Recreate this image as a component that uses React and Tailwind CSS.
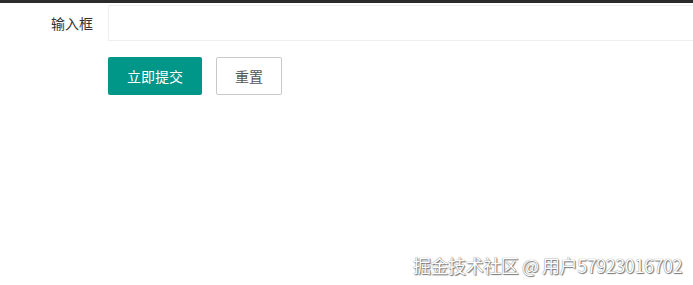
export default function App() {
  return (
    <div className="relative w-[693px] h-[285px] bg-white overflow-hidden font-['Microsoft_YaHei','Noto_Sans_CJK_SC',sans-serif] text-[14px] text-[#333]">
      <div className="h-[3px] bg-[#2b2b2b]" />
      <div className="flex items-center mt-[2px]">
        <label className="w-[93px] text-right">输入框</label>
        <div className="w-[15px]" />
        <div className="flex-1 h-[36px] border border-r-0 border-[#eee] rounded-l-[2px]" />
      </div>
      <div className="flex pl-[108px] mt-[16px] gap-[14px]">
        <button className="h-[38px] w-[94px] bg-[#009688] text-white rounded-[2px]">立即提交</button>
        <button className="h-[38px] w-[66px] border border-[#C9C9C9] text-[#555] bg-white rounded-[2px]">重置</button>
      </div>
      <div className="absolute left-[413px] top-[253px] text-[18px] leading-[24px] text-white [text-shadow:0_0_1px_#555,1px_1px_1px_#777] tracking-[-0.45px]">
        掘金技术社区 @ 用户57923016702
      </div>
    </div>
  )
}
